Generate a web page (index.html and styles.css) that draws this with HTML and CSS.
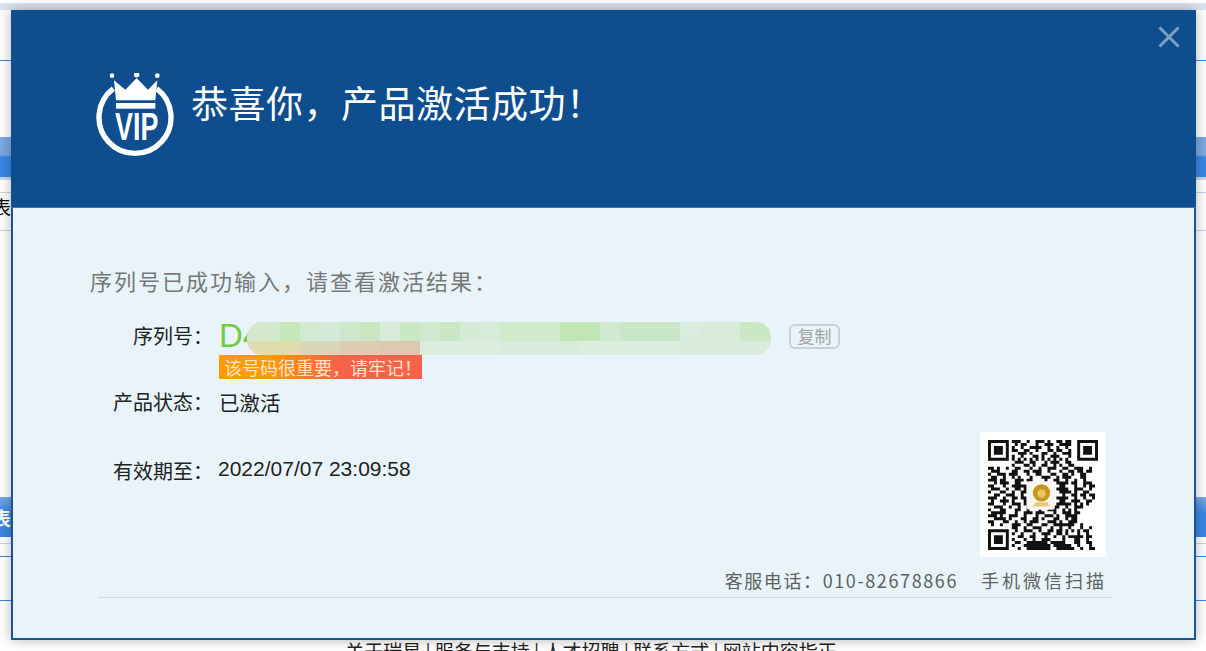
FILE: index.html
```html
<!DOCTYPE html>
<html lang="zh-CN">
<head>
    <meta charset="UTF-8">
    <meta name="viewport" content="width=device-width, initial-scale=1.0">
    <title>产品激活成功</title>
    <link rel="stylesheet" href="styles.css">
</head>
<body>
    <!-- Page behind the dialog -->
    <div class="page">
        <div class="top-strip"></div>
        <div class="blue-line line-a"></div>
        <div class="nav-band"></div>
        <div class="grey-line line-b"></div>
        <div class="cut-text">表</div>
        <div class="grey-line line-c"></div>
        <div class="table-band">表</div>
        <div class="grey-line line-d"></div>
        <div class="blue-line line-e"></div>
        <div class="blue-line line-f"></div>
        <div class="page-footer">关于瑞星 | 服务与支持 | 人才招聘 | 联系方式 | 网站内容指正</div>
    </div>

    <!-- Dialog -->
    <div class="dialog">
        <div class="dialog-head">
            <svg class="vip-icon" viewBox="48 40 240 255">
                <path class="vip-ring" d="M100 87 A108 108 0 1 0 230 87"/>
                <path class="vip-fill" d="M108 122 L102 62 L136 90 L170 55 L204 90 L232 62 L226 122 Z"/>
                <circle class="vip-fill" cx="96" cy="48" r="7"/>
                <circle class="vip-fill" cx="170" cy="45" r="8"/>
                <circle class="vip-fill" cx="232" cy="48" r="7"/>
                <rect class="vip-fill" x="108" y="130" width="118" height="17"/>
                <text class="vip-text" x="105" y="240" textLength="130" lengthAdjust="spacingAndGlyphs">VIP</text>
            </svg>
            <h1 class="dialog-title">恭喜你，产品激活成功<span class="punct">！</span></h1>
            <svg class="close-icon" viewBox="0 0 22 22">
                <path d="M1.5 1.5 L20.5 20.5 M20.5 1.5 L1.5 20.5"/>
            </svg>
        </div>

        <div class="dialog-body">
            <p class="intro">序列号已成功输入，请查看激活结果<span class="punct">：</span></p>

            <div class="row row-serial">
                <span class="row-label">序列号<span class="punct">：</span></span>
                <div class="serial-box">
                    <div class="serial-top">
                        <span class="serial">D4</span>
                        <button class="copy-btn">复制</button>
                    </div>
                    <span class="serial-note">该号码很重要，请牢记<span class="punct">！</span></span>
                    <!-- Mosaic that hides the serial number -->
                    <svg class="mosaic" viewBox="0 0 524 33">
                        <defs>
                            <clipPath id="mosaic-edge"><rect width="524" height="33" rx="15"/></clipPath>
                        </defs>
                        <g clip-path="url(#mosaic-edge)">
                            <rect x="0" y="0" width="33" height="19" fill="#d2e9cd"/>
                            <rect x="33" y="0" width="20" height="19" fill="#c4e6b8"/>
                            <rect x="53" y="0" width="20" height="19" fill="#d2ead2"/>
                            <rect x="73" y="0" width="20" height="19" fill="#d5ebd9"/>
                            <rect x="93" y="0" width="20" height="19" fill="#cee8cc"/>
                            <rect x="113" y="0" width="20" height="19" fill="#c8e6c0"/>
                            <rect x="133" y="0" width="20" height="19" fill="#d6ecd8"/>
                            <rect x="153" y="0" width="20" height="19" fill="#cbe8c4"/>
                            <rect x="173" y="0" width="20" height="19" fill="#d0e9ce"/>
                            <rect x="193" y="0" width="20" height="19" fill="#c8e7c2"/>
                            <rect x="213" y="0" width="20" height="19" fill="#d3ead4"/>
                            <rect x="233" y="0" width="20" height="19" fill="#d6ecdb"/>
                            <rect x="253" y="0" width="60" height="19" fill="#cfe9cb"/>
                            <rect x="313" y="0" width="40" height="19" fill="#c2e5b6"/>
                            <rect x="353" y="0" width="20" height="19" fill="#d0e9d0"/>
                            <rect x="373" y="0" width="60" height="19" fill="#c9e7c6"/>
                            <rect x="433" y="0" width="20" height="19" fill="#d8eddf"/>
                            <rect x="453" y="0" width="40" height="19" fill="#d6ecd8"/>
                            <rect x="493" y="0" width="40" height="19" fill="#c8e7c2"/>
                            <rect x="0" y="19" width="53" height="14" fill="#e0dcae"/>
                            <rect x="53" y="19" width="40" height="14" fill="#dcd6b8"/>
                            <rect x="93" y="19" width="40" height="14" fill="#dccdb2"/>
                            <rect x="133" y="19" width="40" height="14" fill="#dcc8ae"/>
                            <rect x="173" y="19" width="340" height="14" fill="#dcedde"/>
                            <rect x="253" y="19" width="80" height="14" fill="#d8ecdc"/>
                            <rect x="433" y="19" width="91" height="14" fill="#d7ecdb"/>
                        </g>
                    </svg>
                </div>
            </div>

            <div class="row row-status">
                <span class="row-label">产品状态<span class="punct">：</span></span>
                <span class="row-value">已激活</span>
            </div>

            <div class="row row-expire">
                <div class="expire-text">
                    <span class="row-label">有效期至<span class="punct">：</span></span>
                    <span class="expire-value">2022/07/07 23:09:58</span>
                </div>
                <div class="qr-box">
                    <svg class="qr" viewBox="0 0 37 37">
                        <!-- finder squares -->
                        <path class="qr-ring" d="M.5 .5h6v6h-6z M30.5 .5h6v6h-6z M.5 30.5h6v6h-6z"/>
                        <path class="qr-solid" d="M2 2h3v3h-3z M32 2h3v3h-3z M2 32h3v3h-3z"/>
                        <path class="qr-modules" d="
                            M8 .5h3m2 0h1m2 0h3m1 0h1m2 0h2m1 0h2
                            M9 1.5h1m1 0h2m3 0h1m2 0h3m2 0h4
                            M8 2.5h1m2 0h1m2 0h4m2 0h1m2 0h1m2 0h1
                            M8 3.5h2m2 0h2m2 0h1m3 0h2m1 0h2m2 0h1
                            M10 4.5h3m1 0h1m3 0h2m2 0h1m2 0h3
                            M8 5.5h1m2 0h1m3 0h2m1 0h1m2 0h3m3 0h1
                            M8 6.5h1m1 0h1m1 0h1m1 0h1m1 0h1m1 0h1m1 0h1m1 0h1m1 0h1m1 0h1
                            M9 7.5h3m2 0h2m3 0h1m1 0h3m2 0h2
                            M8 8.5h1m3 0h2m1 0h1m2 0h2m2 0h1m1 0h1m2 0h2
                            M0 9.5h2m1 0h1m2 0h1m2 0h2m3 0h1m2 0h1m2 0h3m2 0h2m2 0h3m2 0h1
                            M1 10.5h3m4 0h2m2 0h2m1 0h3m2 0h1m3 0h1m2 0h2m1 0h2m1 0h2
                            M0 11.5h1m2 0h3m1 0h3m3 0h1m2 0h2m3 0h2m2 0h2m1 0h1m2 0h2
                            M1 12.5h2m2 0h1m2 0h1m1 0h1m3 0h1m3 0h3m2 0h1m1 0h3m3 0h2
                            M0 13.5h3m1 0h2m3 0h3m1 0h2m4 0h1m2 0h2m2 0h1m2 0h1m2 0h1
                            M2 14.5h1m1 0h3m2 0h2m12 0h4m1 0h2m2 0h3
                            M0 15.5h2m3 0h1m2 0h5m11 0h2m3 0h1m2 0h1m1 0h2
                            M1 16.5h3m2 0h1m2 0h2m1 0h1m10 0h4m2 0h3m2 0h1
                            M0 17.5h1m3 0h2m2 0h1m2 0h2m11 0h4m1 0h1m2 0h2
                            M2 18.5h2m2 0h3m2 0h1m13 0h1m2 0h2m1 0h2m1 0h2
                            M0 19.5h3m2 0h1m2 0h2m1 0h2m10 0h4m2 0h1m2 0h1m2 0h1
                            M1 20.5h1m2 0h3m1 0h1m3 0h1m11 0h2m2 0h3m2 0h2
                            M0 21.5h2m3 0h1m2 0h3m1 0h1m10 0h5m1 0h1m1 0h1m1 0h1
                            M2 22.5h3m2 0h1m2 0h1m2 0h4m2 0h1m2 0h2m2 0h1m2 0h3
                            M0 23.5h1m3 0h2m3 0h2m2 0h1m3 0h1m2 0h3m2 0h1m1 0h1m1 0h1
                            M1 24.5h5m3 0h1m2 0h3m1 0h3m3 0h1m2 0h3m1 0h2
                            M0 25.5h3m1 0h1m2 0h3m2 0h1m3 0h1m2 0h3m1 0h1m2 0h4
                            M2 26.5h4m1 0h1m3 0h2m2 0h2m1 0h1m3 0h2m2 0h1m1 0h2
                            M0 27.5h2m3 0h2m2 0h1m2 0h1m1 0h3m3 0h3m1 0h1m2 0h3
                            M1 28.5h1m2 0h1m3 0h3m2 0h2m3 0h2m2 0h7m2 0h1
                            M8 29.5h2m2 0h1m2 0h3m3 0h1m2 0h1m2 0h1m3 0h1m2 0h1
                            M9 30.5h1m2 0h3m2 0h1m2 0h2m1 0h2m1 0h1m1 0h1m1 0h1m1 0h2
                            M8 31.5h1m2 0h1m3 0h1m2 0h3m2 0h2m1 0h1m3 0h1m2 0h1
                            M10 32.5h2m2 0h2m3 0h1m2 0h1m2 0h1m1 0h5m1 0h2
                            M8 33.5h1m3 0h1m2 0h1m2 0h3m4 0h1m3 0h2m2 0h1
                            M9 34.5h2m2 0h7m1 0h5m3 0h2m2 0h2
                            M8 35.5h1m3 0h9m1 0h6m2 0h1m3 0h1
                            M10 36.5h1m2 0h8m2 0h6m2 0h1m2 0h2"/>
                        <!-- centre logo -->
                        <rect class="qr-logo-box" x="13" y="14" width="9.5" height="9.5" rx=".8"/>
                        <circle class="qr-lion-mane" cx="18" cy="17.8" r="2.9"/>
                        <circle class="qr-lion-face" cx="18" cy="18" r="1.4"/>
                        <path class="qr-lion-body" d="M14.8 22.4h5.8l-.4-1.5h-4z"/>
                    </svg>
                </div>
            </div>

            <div class="contact">
                <span class="contact-phone">客服电话<span class="punct">：</span>010-82678866</span>
                <span class="contact-scan">手机微信扫描</span>
            </div>
            <div class="divider"></div>
        </div>
    </div>
</body>
</html>
```

FILE: styles.css
```css
html, body {
    margin: 0;
    height: 651px;
    overflow: hidden;
}
body {
    background-color: #fff;
    font-family: "Noto Sans CJK SC", "Liberation Sans", sans-serif;
}
.page {
    height: 651px;
    overflow: hidden;
}
/* full-width punctuation sits mid-cell in the original */
.punct {
    font-family: "Noto Sans CJK TC", sans-serif;
}
.top-strip {
    height: 7px;
    margin-top: 3px;
    background-color: #d8e3f0;
}
.blue-line {
    height: 1px;
    background-color: #3a87e4;
}
.grey-line {
    height: 1px;
    background-color: #c5d3e4;
}
.line-a {
    margin-top: 50px;
}
.nav-band {
    height: 40px;
    margin-top: 76px;
    background: linear-gradient(#7ba9e3 0, #7ba9e3 45%, #3b87e3 50%, #3b87e3 100%);
    border-bottom: 3px solid #c8d8ee;
}
.line-b {
    margin-top: 12px;
}
.cut-text {
    height: 27px;
    margin-left: -8px;
    font-size: 19px;
    line-height: 27px;
    color: #000;
}
.line-c {
    margin-top: 10px;
}
.table-band {
    height: 40px;
    margin-top: 266px;
    margin-left: -8px;
    font-size: 19px;
    font-weight: bold;
    line-height: 42px;
    color: #fff;
    background: linear-gradient(#7ba9e3, #3b87e3 40%);
}
.line-d {
    margin-top: 6px;
}
.line-e {
    margin-top: 12px;
}
.line-f {
    margin-top: 43px;
}
.page-footer {
    margin-top: 36px;
    padding-right: 24px;
    font-size: 19px;
    line-height: 28px;
    text-align: center;
    color: #222;
}

/* dialog */
.dialog {
    position: absolute;
    left: 11px;
    top: 10px;
    box-sizing: border-box;
    width: 1185px;
    height: 630px;
    background-color: #e8f4fa;
    border: 2px solid #1a5496;
    border-top: 0;
    box-shadow: 0 0 12px rgba(0,0,0,0.3);
}
.dialog-head {
    position: relative;
    display: flex;
    align-items: flex-start;
    box-sizing: border-box;
    height: 198px;
    margin: 0 -2px;
    padding: 63px 0 0 85px;
    background-color: #0e4d8e;
    border-bottom: 1px solid #3f72a8;
}
.vip-icon {
    flex: none;
    width: 80px;
    height: 85px;
}
.vip-ring {
    fill: none;
    stroke: #fff;
    stroke-width: 16;
}
.vip-fill {
    fill: #fff;
}
.vip-text {
    font-family: "Liberation Sans", sans-serif;
    font-size: 118px;
    font-weight: bold;
    fill: #fff;
}
.dialog-title {
    margin: -1px 0 0 15px;
    font-size: 37px;
    font-weight: 400;
    letter-spacing: 0.5px;
    line-height: 60px;
    color: #fff;
}
.close-icon {
    position: absolute;
    left: 1147px;
    top: 16px;
    width: 22px;
    height: 22px;
}
.close-icon path {
    fill: none;
    stroke: #7f9fc4;
    stroke-width: 3;
}
.dialog-body {
    padding: 0 82px 0 0;
}
.intro {
    margin: 0;
    padding: 55px 0 0 77px;
    font-size: 22px;
    letter-spacing: 2px;
    line-height: 34px;
    color: #777;
}
.row {
    display: flex;
}
.row-label {
    flex: none;
    width: 200px;
    font-size: 20px;
    text-align: right;
    color: #222;
}
.row-serial {
    margin-top: 19px;
}
.row-serial .row-label {
    line-height: 40px;
}
.serial-box {
    position: relative;
    margin-left: 6px;
    display: flex;
    flex-direction: column;
    align-items: flex-start;
}
.serial-top {
    display: flex;
    align-items: center;
    height: 39px;
}
.serial {
    width: 570px;
    font-family: "Liberation Sans", sans-serif;
    font-size: 33px;
    color: #76c944;
}
.copy-btn {
    width: 51px;
    height: 25px;
    margin-top: 1px;
    padding: 0;
    font-family: "Noto Sans CJK SC", sans-serif;
    font-size: 17px;
    line-height: 20px;
    color: #a2a2a2;
    background: none;
    border: 2px solid #cbcfd2;
    border-radius: 6px;
}
.serial-note {
    box-sizing: border-box;
    width: 203px;
    height: 24px;
    padding-left: 5px;
    font-size: 18px;
    line-height: 24px;
    white-space: nowrap;
    color: #fde3cc;
    background: linear-gradient(90deg, #ff9a00, #ff9a00 25%, #f96248 60%);
}
.mosaic {
    position: absolute;
    left: 28px;
    top: 6px;
    width: 524px;
    height: 33px;
}
.row-status {
    margin-top: 6px;
}
.row-status .row-label,
.row-value {
    line-height: 34px;
}
.row-value {
    margin-left: 6px;
    font-size: 20.5px;
    color: #222;
}
.row-expire {
    justify-content: space-between;
    margin-top: 13px;
}
.expire-text {
    display: flex;
    padding-top: 18px;
}
.expire-text .row-label {
    line-height: 42px;
}
.expire-value {
    margin-left: 5px;
    font-family: "Liberation Sans", sans-serif;
    font-size: 21px;
    line-height: 38px;
    color: #222;
}
.qr-box {
    display: flex;
    justify-content: center;
    align-items: center;
    width: 126px;
    height: 125px;
    margin-right: 6px;
    background-color: #fff;
}
.qr {
    width: 110px;
    height: 110px;
    filter: blur(0.5px);
}
.qr-ring {
    fill: none;
    stroke: #111;
    stroke-width: 1;
}
.qr-solid {
    fill: #111;
}
.qr-modules {
    fill: none;
    stroke: #111;
    stroke-width: 1;
}
.qr-logo-box {
    fill: #f7f6f2;
}
.qr-lion-mane {
    fill: #c8951f;
}
.qr-lion-face {
    fill: #ecc65b;
}
.qr-lion-body {
    fill: #e6c979;
}
.contact {
    display: flex;
    justify-content: flex-end;
    gap: 23px;
    margin-top: 9px;
    font-size: 18px;
    line-height: 28px;
    color: #5f5f5f;
}
.contact-phone {
    letter-spacing: 1.6px;
}
.contact-scan {
    margin-right: 5px;
    letter-spacing: 3px;
}
.divider {
    height: 1px;
    margin: 3px 0 0 85px;
    width: 1014px;
    background-color: #cdd9e0;
}
```
